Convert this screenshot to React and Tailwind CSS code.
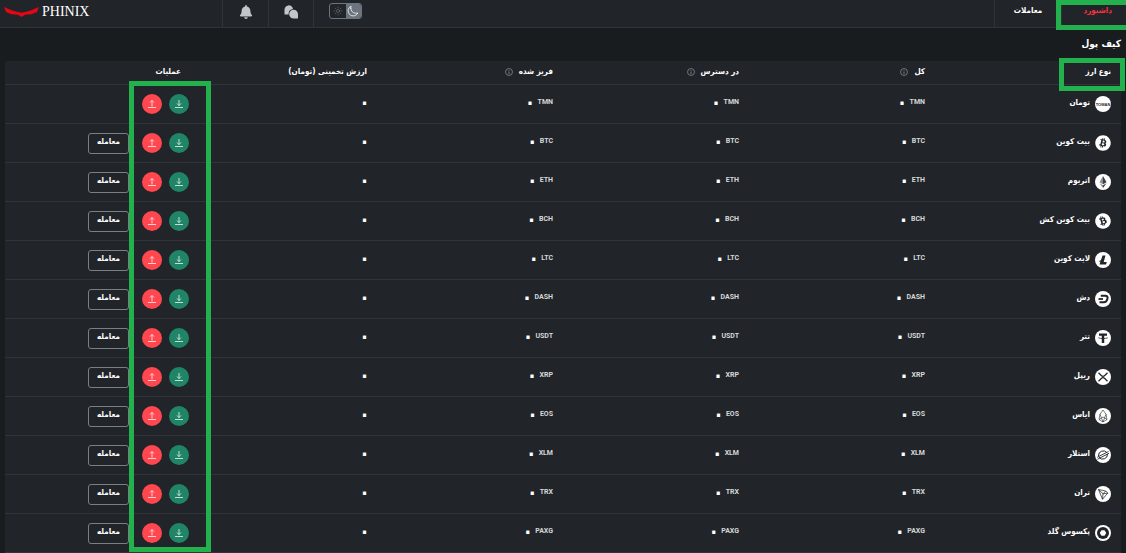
import React, { useState } from 'react';
import { FaBitcoin, FaBell } from 'react-icons/fa';
import { IoMoonOutline, IoSunnyOutline } from 'react-icons/io5';

const coins = [
    { symbol: 'TMN', name: 'تومان', tradable: false },
    { symbol: 'BTC', name: 'بیت کوین', tradable: true },
    { symbol: 'ETH', name: 'اتریوم', tradable: true },
    { symbol: 'BCH', name: 'بیت کوین کش', tradable: true },
    { symbol: 'LTC', name: 'لایت کوین', tradable: true },
    { symbol: 'DASH', name: 'دش', tradable: true },
    { symbol: 'USDT', name: 'تتر', tradable: true },
    { symbol: 'XRP', name: 'ریپل', tradable: true },
    { symbol: 'EOS', name: 'ایاس', tradable: true },
    { symbol: 'XLM', name: 'استلار', tradable: true },
    { symbol: 'TRX', name: 'تران', tradable: true },
    { symbol: 'PAXG', name: 'پکسوس گلد', tradable: true },
];

// Marks drawn in dark ink on a 32x32 white disc
const coinMarks = {
    TMN: (
        <text x="16" y="19" textAnchor="middle" fontSize="8" fontWeight="700" fill="#212429" fontFamily="Liberation Sans, sans-serif">TOMAN</text>
    ),
    ETH: (
        <>
            <path d="M16 4 L9 16.5 L16 20.5 Z" fill="#8a8d90" />
            <path d="M16 4 L23 16.5 L16 20.5 Z" fill="#3a3d41" />
            <path d="M9 18.5 L16 28 V22.5 Z" fill="#8a8d90" />
            <path d="M23 18.5 L16 28 V22.5 Z" fill="#3a3d41" />
        </>
    ),
    LTC: (
        <>
            <path d="M15 7h6l-3.600 13h6.100l-1.400 5H9z" fill="#212429" />
            <path d="M9 19l9-4.500" stroke="#212429" strokeWidth="2.500" />
        </>
    ),
    DASH: (
        <>
            <path d="M11.500 9.500h9c4.500 0 5.300 3 4.300 6.500s-3 6.500-7 6.500H9" fill="none" stroke="#212429" strokeWidth="4" />
            <path d="M7 16h9" stroke="#212429" strokeWidth="3.500" />
        </>
    ),
    USDT: (
        <>
            <path d="M8 7h16v4.500h-5.500V26h-5V11.500H8z" fill="#212429" />
            <path d="M6.500 15.500c3 2.200 16 2.200 19 0" fill="none" stroke="#212429" strokeWidth="1.500" />
        </>
    ),
    XRP: (
        <path d="M7 7.500l5.500 5.500c2 2 5 2 7 0L25 7.500M7 24.500l5.500-5.500c2-2 5-2 7 0l5.500 5.500" fill="none" stroke="#212429" strokeWidth="2.400" />
    ),
    EOS: (
        <path d="M16 4l-6 8.500L8 23l8 5 8-5-2-10.500zM10 12.500L16 28l6-15.500M8 23l8-5 8 5" fill="none" stroke="#212429" strokeWidth="1.200" />
    ),
    XLM: (
        <>
            <path d="M24 11.500A9.500 9.500 0 0 0 7 18M8 20.500A9.500 9.500 0 0 0 25 14" fill="none" stroke="#212429" strokeWidth="2" />
            <path d="M4.500 20.500L27 9M5 24.500L28 12.500" stroke="#212429" strokeWidth="1.800" />
        </>
    ),
    TRX: (
        <path d="M7 7l14.500 3 4 4.300L15 26.500zM7 7l9 8.500 5.500-5.500M16 15.500l9.500-1.200M16 15.500L15 26.500" fill="none" stroke="#212429" strokeWidth="1.500" strokeLinejoin="round" />
    ),
    PAXG: (
        <>
            <circle cx="16" cy="16" r="12" fill="#212429" />
            <path d="M13 10.500h6l3.500 5.500-3.500 5.500h-6L9.500 16z" fill="#fff" />
        </>
    ),
};

const CoinIcon = ({ symbol }) => {
    if (symbol === 'BTC' || symbol === 'BCH') {
        return (
            <span className="flex h-4 w-4 shrink-0 rounded-full bg-[#212429] text-white">
                <FaBitcoin className={symbol === 'BCH' ? 'h-4 w-4 -rotate-30' : 'h-4 w-4'} />
            </span>
        );
    }
    return (
        <svg viewBox="0 0 32 32" className="h-4 w-4 shrink-0">
            <circle cx="16" cy="16" r="16" fill="#fff" />
            {coinMarks[symbol]}
        </svg>
    );
};

const InfoIcon = () => (
    <svg viewBox="0 0 9 9" className="h-2 w-2 shrink-0">
        <circle cx="4.500" cy="4.500" r="3.900" fill="none" stroke="#85898d" strokeWidth="0.900" />
        <path d="M4.500 2.200v1M4.500 4v3" stroke="#85898d" />
    </svg>
);

const Logo = () => (
    <a href="#home" className="flex w-[222px] items-center gap-[3px] pl-1 text-white">
        <svg viewBox="0 0 35 10" className="h-[10px] w-[35px]">
            <path d="M0 0l9 3.700 8.500 2 8.500-2L35 0l-2 5-5.500 2.200-6.500.6-3.500 2.200-3.500-2.200-6.500-.6L2 5z" fill="#e30613" />
        </svg>
        <span className="font-['Liberation_Serif',serif] text-sm leading-4">PHINIX</span>
    </a>
);

const Header = ({ dark, setDark }) => (
    <header className="flex h-7 items-stretch justify-between border-b border-[#303439] bg-[#212429]">
        <nav className="flex text-[8px] font-bold">
            <a href="#dashboard" className="relative w-16 pt-[5px] pr-3.5 leading-3 text-[#f5333f]">
                داشبورد
                <span className="absolute top-0 right-0 -left-1.5 h-[30px] border-5 border-r-0 border-[#22b14c]" />
            </a>
            <a href="#trades" className="w-[68px] border-x border-[#303439] pt-[5px] text-center leading-3">معاملات</a>
        </nav>
        <div dir="ltr" className="flex pb-1">
            <Logo />
            <button aria-label="اعلان‌ها" className="-mb-1 flex w-[46px] items-center justify-center border-l border-[#303439] pb-1 text-[#c3c6c8]">
                <FaBell className="h-3.5 w-3.5" />
            </button>
            <button aria-label="گفتگو" className="-mb-1 flex w-[46px] items-center justify-center border-x border-[#303439] pb-1">
                <svg viewBox="0 0 28 28" className="h-3.5 w-3.5">
                    <path d="M1 19V10a8.500 8.500 0 0 1 17-1.500C12 8.500 8.500 13 9.500 19z" fill="#c3c6c8" />
                    <path d="M28 27H19a8.800 8.800 0 1 1 9-9z" fill="#c3c6c8" />
                </svg>
            </button>
            <button
                aria-label="حالت نمایش"
                onClick={() => setDark(!dark)}
                className="mt-[3px] ml-[15px] flex h-4 w-[33px] self-start overflow-hidden rounded-[3px] border border-[#6c757d]"
            >
                <span className="flex h-full flex-1 items-center justify-center text-[#6c757d]"><IoSunnyOutline className="h-2.5 w-2.5" /></span>
                <span className="flex h-full flex-1 items-center justify-center bg-[#6c757d] text-white"><IoMoonOutline className="h-3 w-3" /></span>
            </button>
        </div>
    </header>
);

const HeadCell = ({ children, info }) => (
    <th className="relative h-6 border-b border-[#303439] px-2.5 pb-0.5 text-right font-bold">
        <span className="flex items-center gap-1.5">
            {children}
            {info && <InfoIcon />}
        </span>
    </th>
);

const Amount = ({ symbol }) => (
    <td className="h-[39px] border-b border-[#303439] px-2.5 pb-1">
        <span className="flex items-center gap-[5px]">
            {symbol && <span className="font-['Roboto',sans-serif] text-[7px] font-bold text-[#d5d8da]">{symbol}</span>}
            <span className="flex w-[5px] justify-center text-xl leading-3 font-bold">۰</span>
        </span>
    </td>
);

const Actions = ({ tradable }) => (
    <td className="h-[39px] border-b border-[#303439] pr-0.5">
        <div className="flex items-center">
            <button aria-label="واریز" className="flex h-5 w-5 items-center justify-center rounded-full bg-[#1f8566]">
                <svg viewBox="0 0 8 8" className="h-2 w-2" fill="none" stroke="#c4ded6">
                    <path d="M4 0v6M2 3.500l2 2 2-2M0 7.500h8" />
                </svg>
            </button>
            <button aria-label="برداشت" className="mr-[7px] flex h-5 w-5 items-center justify-center rounded-full bg-[#ff4750]">
                <svg viewBox="0 0 8 8" className="h-2 w-2" fill="none" stroke="#ffcfd2">
                    <path d="M4 6.500V.5M2 2.500l2-2 2 2M0 7.500h8" />
                </svg>
            </button>
            {tradable && (
                <button className="mr-[13px] h-[21px] w-[41px] rounded-[3px] border border-[#7a7f84] pb-0.5 text-[8px] leading-3 font-bold">معامله</button>
            )}
        </div>
    </td>
);

const App = () => {
    const [dark, setDark] = useState(true);

    return (
        <div dir="rtl" lang="fa" className="min-h-screen bg-[#181c1f] font-['DejaVu_Sans_Condensed','DejaVu_Sans',sans-serif] text-white">
            <Header dark={dark} setDark={setDark} />

            <main className="px-[5px]">
                <h1 className="flex h-[33px] items-center pb-0.5 text-[10px] font-bold">کیف پول</h1>

                {/* Wallet table */}
                <div className="relative rounded-t-[3px] bg-[#212429]">
                    <table className="w-full table-fixed border-separate border-spacing-0 text-[8px] leading-3">
                        <thead>
                            <tr>
                                <HeadCell>
                                    نوع ارز
                                    <span className="absolute -top-[3px] -right-1 h-[33px] w-[66px] border-5 border-[#22b14c]" />
                                </HeadCell>
                                <HeadCell info>کل</HeadCell>
                                <HeadCell info>در دسترس</HeadCell>
                                <HeadCell info>فریز شده</HeadCell>
                                <HeadCell>ارزش تخمینی (تومان)</HeadCell>
                                <HeadCell>عملیات</HeadCell>
                            </tr>
                        </thead>
                        <tbody>
                            {coins.map((coin) => (
                                <tr key={coin.symbol}>
                                    <td className="h-[39px] border-b border-[#303439] px-2.5">
                                        <div className="flex items-center gap-[5px] font-bold">
                                            <CoinIcon symbol={coin.symbol} />
                                            <span className="pb-0.5">{coin.name}</span>
                                        </div>
                                    </td>
                                    <Amount symbol={coin.symbol} />
                                    <Amount symbol={coin.symbol} />
                                    <Amount symbol={coin.symbol} />
                                    <Amount />
                                    <Actions tradable={coin.tradable} />
                                </tr>
                            ))}
                        </tbody>
                    </table>

                    {/* Frame around the deposit and withdraw buttons */}
                    <div className="pointer-events-none absolute top-5 right-[calc(83.333%-20px)] bottom-px w-[82px] border-5 border-[#22b14c]" />
                </div>
            </main>
        </div>
    );
};

export default App;
